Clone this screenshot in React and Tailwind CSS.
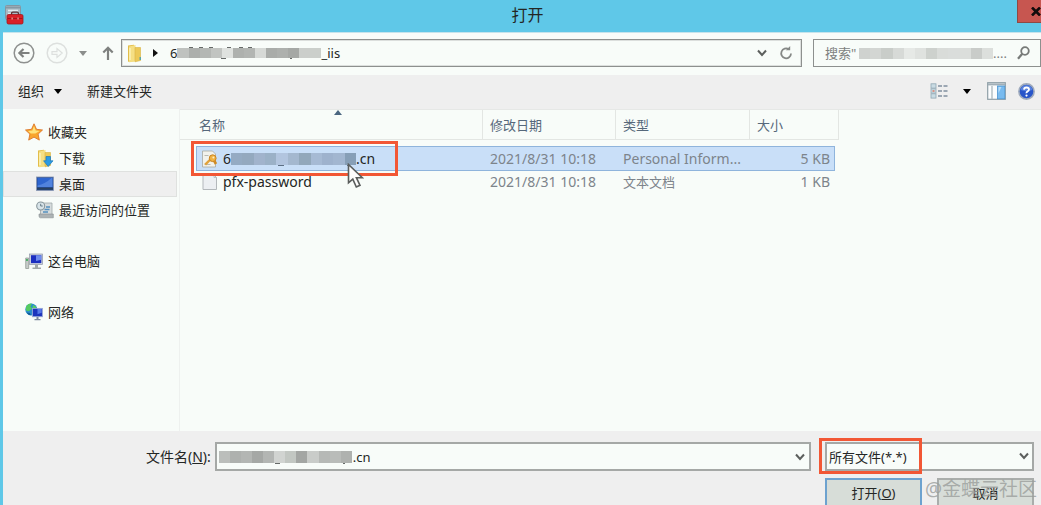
import React from "react";

function Mosaic({ colors, marks = [], markColor = "#666a68", className = "" }) {
  return (
    <span aria-hidden="true" className={`flex ${className}`}>
      {colors.map((c, i) => (
        <span key={i} className="h-full flex-1" style={{ backgroundColor: c }} />
      ))}
      {marks.map(([left, width, top]) => (
        <span
          key={left}
          className={`absolute h-px ${top ? "bottom-full" : "top-full"}`}
          style={{ left, width, backgroundColor: markColor }}
        />
      ))}
    </span>
  );
}

const Chevron = ({ className = "" }) => (
  <svg viewBox="0 0 10 8" className={`h-2 w-[10px] ${className}`} fill="none" stroke="#5c5f5d" strokeWidth="2">
    <path d="M1 1.5 5 6l4-4.5" />
  </svg>
);

const Caret = ({ className = "" }) => (
  <svg viewBox="0 0 8 5" className={`h-[5px] w-2 ${className}`}>
    <path d="M0 0h8L4 5z" fill="currentColor" />
  </svg>
);

const AppIcon = () => (
  <svg viewBox="0 0 19 20" className="h-5 w-[19px]">
    <rect x="0.5" y="0.5" width="15" height="14" rx="1" fill="#a9bbc5" stroke="#8397a3" />
    <path d="M1 2.5h14" stroke="#8499a5" strokeWidth="2" />
    <path d="M3 5.5h10M3 8.5h4" stroke="#e3edf1" strokeWidth="1.6" />
    <path d="M6.5 10V8.7Q6.5 7.2 8 7.2h4q1.5 0 1.5 1.5V10" fill="none" stroke="#5d3334" strokeWidth="1.3" />
    <rect x="2" y="9.5" width="16" height="9.5" rx="1.5" fill="#d92027" stroke="#a5171c" strokeWidth="0.8" />
    <path d="M2.5 13.5h15" stroke="#a3161b" />
    <path d="M6.4 12.6h1.5v2H6.4zM12.3 12.6h1.5v2h-1.5z" fill="#e88a88" />
  </svg>
);

const CircleArrow = ({ faded, flip }) => (
  <svg viewBox="0 0 22 22" className="h-[22px] w-[22px]" fill="none" stroke={faded ? "#dde0de" : "#8e918f"}>
    <circle cx="11" cy="11" r="9.8" strokeWidth="1.5" />
    {flip ? (
      <path d="M6 9.7h5V6.6l5.2 4.4-5.2 4.4v-3.1H6z" strokeWidth="1.2" />
    ) : (
      <path d="M16.5 11H6.5M10.5 7 6.4 11l4.1 4" strokeWidth="2.2" stroke="#7e817f" />
    )}
  </svg>
);

const Folder = ({ download }) => (
  <svg viewBox="0 0 18 19" className="h-[19px] w-[18px]">
    <path d="M2 1.5 8 .8v16.4l-6 .5z" fill="#e2bd4a" />
    <path d="M3 2.5 9.5 1v16.5L3 18.2z" fill="#f5df83" />
    <path d="M9 3.5h5.5v13L9 17.8z" fill="#ecc957" stroke="#d9b243" strokeWidth="0.6" />
    <path d="M4 4v12" stroke="#fbf0b4" strokeWidth="1.6" />
    {download ? (
      <path d="M10 7.5h4.5v4.3H17l-4.8 5.7-4.6-5.7H10z" fill="#2c9ae2" stroke="#1878bb" strokeWidth="0.7" />
    ) : (
      <path d="M13.5 13h1.5v3h-1.5z" fill="#5ba6a6" />
    )}
  </svg>
);

const Star = () => (
  <svg viewBox="0 0 18 18" className="h-[18px] w-[18px]">
    <path d="m9 .8 2.5 5.5 6 .7-4.4 4.1 1.2 6L9 14.1l-5.3 3 1.2-6L.5 7l6-.7z" fill="#f9a52c" stroke="#dc7628" strokeWidth="0.9" />
    <path d="m9 3 1.7 4.4 4 .5-4.4 2.5H5.8L3 7.9l4.4-.5z" fill="#ffe27b" />
  </svg>
);

const DesktopIcon = () => (
  <svg viewBox="0 0 18 16" className="h-4 w-[18px]">
    <rect x="0.5" y="1" width="17" height="13.5" fill="#254d9c" stroke="#8a97b1" strokeWidth="0.8" />
    <path d="M1.5 2h15v9h-15z" fill="#2e65cf" />
    <path d="M1.5 9.5Q9 8 15.5 2h1v9h-15z" fill="#73a2ed" opacity=".5" />
    <path d="M1 12.7h16" stroke="#284160" strokeWidth="2" />
  </svg>
);

const RecentIcon = () => (
  <svg viewBox="0 0 18 18" className="h-[18px] w-[18px]">
    <path d="M4.5 2H16v13H4.5z" fill="#d7dcdd" stroke="#a0a8aa" strokeWidth="0.8" />
    <path d="M3 13h14.3v3.8H4.5Q3 16.7 3 15z" fill="#adb3b5" stroke="#878f91" strokeWidth="0.6" />
    <path d="M10 6h4M8.5 8.5h5M7 11h5" stroke="#5690bf" strokeWidth="1.3" />
    <circle cx="4.7" cy="5" r="4" fill="#d8e4e9" stroke="#89979d" strokeWidth="1.1" />
    <path d="M4.7 2.8V5h2" fill="none" stroke="#647985" />
  </svg>
);

const ComputerIcon = () => (
  <svg viewBox="0 0 18 17" className="h-[17px] w-[18px]">
    <path d="M.7 5h3v10.5h-3z" fill="#c7ccca" stroke="#89928d" strokeWidth="0.7" />
    <path d="M1 7h2" stroke="#29a84b" strokeWidth="1.7" />
    <rect x="4.6" y="1" width="13" height="10.5" fill="#cbd0dd" stroke="#9198a8" strokeWidth="0.7" />
    <path d="M6 2.2h10.3v7.9H6z" fill="#1c2fc0" />
    <path d="M11 2.2h5.3v4.5L11 8z" fill="#6e8ced" />
    <path d="M10 11.5h3v3h3v1.5H7.5v-1.5H10z" fill="#a1a8a8" />
  </svg>
);

const NetworkIcon = () => (
  <svg viewBox="0 0 18 18" className="h-[18px] w-[18px]">
    <circle cx="6.3" cy="6.5" r="6" fill="#298dcc" />
    <path d="M1 4Q3 0 7 .7L5.5 3.5 7 5.5 3.8 8.3 1 7.5zM8 2l3.5 2-2 3-2-2z" fill="#55cb60" />
    <path d="M1.5 9.5 5 10l1 2.3Q3 12.3 1.5 9.5z" fill="#125e99" />
    <rect x="7.4" y="5.4" width="10" height="8.3" fill="#1c34bd" stroke="#99a9d6" strokeWidth="0.9" />
    <path d="M12.5 6h4.2v3.8l-4.2 1.5z" fill="#5678e8" />
    <path d="M11.5 14h2v2h2v1.2h-6V16h2z" fill="#7b87a0" />
  </svg>
);

const CertIcon = () => (
  <svg viewBox="0 0 18 18" className="h-[18px] w-[18px]">
    <path d="M1.5 1h10l3 3v13h-13z" fill="#f2f2ec" stroke="#a8a8a0" strokeWidth="0.8" />
    <path d="M3.5 5.5h4M3.5 14.5h6" stroke="#b8b9b3" />
    <path d="M9.3 9.5 4.2 14.7" stroke="#e0a23c" strokeWidth="2.4" />
    <path d="M12.5 9.5 15 14" stroke="#d08b24" strokeWidth="2.6" />
    <circle cx="11.7" cy="8.2" r="3.4" fill="#efb243" stroke="#c98524" />
    <circle cx="12.4" cy="7.4" r="1" fill="#fdeec4" />
  </svg>
);

const FileIcon = () => (
  <svg viewBox="0 0 18 18" className="h-[18px] w-[18px]">
    <path d="M2 2h11l2.5 2.5V16.5H2z" fill="#eceff2" stroke="#b3b8bb" />
    <path d="M13 2v2.5h2.5" fill="none" stroke="#b3b8bb" strokeWidth="0.8" />
  </svg>
);

const ViewIcon = () => (
  <svg viewBox="0 0 18 16" className="h-4 w-[18px]">
    <g fill="#c9dbe3" stroke="#91a8b4" strokeWidth="0.8">
      <rect x="1" y="0.8" width="5" height="4.3" />
      <rect x="1" y="5.8" width="5" height="4.3" />
      <rect x="1" y="10.8" width="5" height="4.3" />
    </g>
    <path d="M2.5 8h2" stroke="#dd806d" strokeWidth="1.6" />
    <path d="M8 3h4M13.5 3h4M8 8h4M13.5 8h4M8 13h4M13.5 13h4" stroke="#8190a0" strokeWidth="1.5" />
  </svg>
);

const PaneIcon = () => (
  <svg viewBox="0 0 19 18" className="h-[18px] w-[19px]">
    <rect x="0.7" y="0.7" width="17.6" height="16.6" fill="#fbfdfe" stroke="#8f9fa7" strokeWidth="1.2" />
    <path d="M1 2.4h17" stroke="#a2afb7" strokeWidth="2" />
    <path d="M5 4v13" stroke="#b0bcc2" strokeWidth="1.4" />
    <rect x="10.5" y="4" width="7.3" height="12.8" fill="#79bbef" stroke="#4a95d1" strokeWidth="0.8" />
    <path d="M11.5 5h3l-3 6z" fill="#b9def9" />
  </svg>
);

const HelpIcon = () => (
  <svg viewBox="0 0 17 17" className="h-[17px] w-[17px]">
    <circle cx="8.5" cy="8.5" r="7.6" fill="#2855c9" stroke="#9da9bc" strokeWidth="1.6" />
    <path d="M2.5 7Q3.5 2.5 8.5 2.3T14.5 7Q8.5 9 2.5 7z" fill="#6c95e8" opacity=".7" />
    <path d="M6 6.6Q6.1 4.5 8.5 4.5T11 6.5Q11 7.7 9.6 8.4T8.5 10.3" fill="none" stroke="white" strokeWidth="1.8" />
    <circle cx="8.5" cy="12.6" r="1.1" fill="white" />
  </svg>
);

const Pointer = () => (
  <svg viewBox="0 0 17 26" className="h-[26px] w-[17px]">
    <path d="M1.5 1.5v18.3l4.3-3.7 3.5 7.9 3.7-1.7-3.6-7.6h5.9z" fill="#fdfdfd" stroke="#5a5d5c" strokeWidth="1.6" />
  </svg>
);

function SideItem({ icon, label, nested, selected }) {
  return (
    <button
      type="button"
      className={`flex h-[26px] w-full items-center gap-[5px] border text-left ${nested ? "pl-8" : "pl-[21px]"} ${
        selected ? "border-[#dfe1df] bg-[#efefef]" : "border-transparent"
      }`}
    >
      <span className="flex w-[18px] shrink-0 justify-center">{icon}</span>
      <span className="whitespace-nowrap">{label}</span>
    </button>
  );
}

const pathColors = ["#bfc2bf", "#acafac", "#b4b7b4", "#c1c4c1", "#dfe2df", "#aeb1ae", "#b2b5b2", "#d6d9d6", "#a9aca9", "#adb0ad", "#a5a8a5", "#cbcecb", "#cbcfcb"];
const searchColors = ["#cfd2cf", "#d3d6d3", "#c9cdc9", "#d7dad7", "#e6e9e6", "#dfe2df", "#cdd1cd", "#d9dcd9", "#dadddb", "#dbdedb", "#c9ccc9", "#dcdfdc"];
const rowColors = ["#95abc3", "#94a9bf", "#a1b3cc", "#9bb1c7", "#b2c5df", "#a4b8cf", "#92a8bb", "#a6bad4", "#9eb2cd", "#a2b6d0", "#879fb7"];
const nameColors = ["#bbbebb", "#aeb1ae", "#b3b6b3", "#a5a8a5", "#b3b6b3", "#d1d4d1", "#c2c7c2", "#a3a6a3", "#c9ccc9", "#b6b9b6", "#b9bcb9", "#afb2af"];

const pathMarks = [[12, 4, true], [22, 4, true], [32, 4, true], [44, 5], [50, 4, true], [62, 4, true], [71, 4, true], [113, 2]];
const rowMarks = [[47, 6], [116, 3]];
const nameMarks = [[56, 5], [124, 2]];

const headCell = "relative h-[30px] border-b border-r border-[#e3e6e3] p-0 pl-[7px] text-left font-normal text-[#56687b]";
const selCell = "h-[25px] border-y border-[#8fb4dc] bg-[#c9dff8] p-0";
const rowCell = "h-[22px] p-0";

export default function App() {
  return (
    <div
      lang="zh-CN"
      className="flex min-h-screen flex-col bg-[#5fc8e8] font-['Noto_Sans','Noto_Sans_CJK_SC',sans-serif] text-[13px] leading-5 text-[#242624]"
    >
      <header className="flex h-8 items-start">
        <span className="pl-[5px] pt-[5px]">
          <AppIcon />
        </span>
        <h1 className="flex-1 pl-[14px] pt-[3px] text-center text-[16px] leading-6">打开</h1>
        <button type="button" aria-label="关闭" className="flex h-[23px] w-6 items-center justify-end border-b border-l border-[#8e4944] bg-[#c75650]">
          <svg viewBox="0 0 10 9" className="h-[9px] w-[10px]" stroke="#120b0b" strokeWidth="2.6">
            <path d="m1 .5 8 8M9 .5l-8 8" />
          </svg>
        </button>
      </header>

      <div className="ml-[3px] flex flex-1 flex-col border-t border-[#c5e4ec] bg-[#f8fcf9]">
        <nav className="flex h-[42px] items-center pb-[2px] pl-[10px]">
          <button type="button" aria-label="后退"><CircleArrow /></button>
          <button type="button" aria-label="前进" className="ml-[11px]"><CircleArrow faded flip /></button>
          <button type="button" aria-label="最近位置" className="ml-[11px] text-[#8b8e8c]"><Caret /></button>
          <button type="button" aria-label="上移" className="ml-[15px]">
            <svg viewBox="0 0 12 14" className="h-[14px] w-3" fill="none" stroke="#7e817f" strokeWidth="2.2">
              <path d="M6 14V2M1.3 6.5 6 1.8l4.7 4.7" />
            </svg>
          </button>
          <div className="ml-[7px] flex h-7 flex-1 items-center border border-[#8d908e] pl-1 pr-2 shadow-[inset_0_0_0_1px_#dcdfdd]">
            <Folder />
            <svg viewBox="0 0 5 8" className="ml-[9px] h-2 w-[5px]"><path d="M0 0v8l5-4z" fill="#111" /></svg>
            <span className="ml-3">6</span>
            <Mosaic colors={pathColors} marks={pathMarks} className="relative h-[10px] w-[144px]" />
            <span>_iis</span>
            <button type="button" aria-label="历史路径" className="ml-auto"><Chevron /></button>
            <button type="button" aria-label="刷新" className="ml-3">
              <svg viewBox="0 0 14 14" className="h-[14px] w-[14px]" fill="none" stroke="#858886" strokeWidth="1.8">
                <path d="M9.8 3.3A4.9 4.9 0 1 0 12 7.5" />
                <path d="M6.8 4.3h4.4V0z" fill="#858886" stroke="none" />
              </svg>
            </button>
          </div>
          <div className="relative ml-[11px] flex h-7 w-[228px] items-center border border-[#8d908e] pl-[11px] pr-[10px]">
            <input type="search" aria-label="搜索" placeholder='搜索"' className="min-w-0 flex-1 bg-transparent outline-none placeholder:text-[#7e817f]" />
            <span className="absolute left-[45px] flex items-center text-[#7e817f]">
              <Mosaic colors={searchColors} className="relative h-[11px] w-[134px]" />
              ....
            </span>
            <svg viewBox="0 0 13 14" className="h-[14px] w-[13px]" fill="none" stroke="#777a78" strokeWidth="1.8">
              <circle cx="8" cy="5" r="3.8" />
              <path d="M5.3 7.8 1 12.7" strokeWidth="2.3" />
            </svg>
          </div>
        </nav>

        <div className="flex h-[34px] items-center bg-[#efefef] pb-[2px] pl-[15px] pr-[6px]">
          <button type="button" className="flex items-center gap-[10px]">
            组织 <Caret className="text-black" />
          </button>
          <button type="button" className="ml-[25px]">新建文件夹</button>
          <button type="button" aria-label="更改视图" className="ml-auto"><ViewIcon /></button>
          <button type="button" aria-label="更多视图" className="ml-[15px] text-black"><Caret /></button>
          <button type="button" aria-label="预览窗格" className="ml-4"><PaneIcon /></button>
          <button type="button" aria-label="帮助" className="ml-3"><HelpIcon /></button>
        </div>

        <main className="flex flex-1">
          <aside className="w-[177px] shrink-0 border-r border-[#eef1ef] pr-[2px] pt-[10px]">
            <SideItem icon={<Star />} label="收藏夹" />
            <SideItem nested icon={<Folder download />} label="下载" />
            <SideItem nested selected icon={<DesktopIcon />} label="桌面" />
            <SideItem nested icon={<RecentIcon />} label="最近访问的位置" />
            <div className="mt-[25px]"><SideItem icon={<ComputerIcon />} label="这台电脑" /></div>
            <div className="mt-[25px]"><SideItem icon={<NetworkIcon />} label="网络" /></div>
          </aside>

          <section className="relative flex-1 border-t border-[#e6e8e6]">
            <table className="w-[659px] table-fixed border-separate border-spacing-0">
              <colgroup>
                <col className="w-4" />
                <col className="w-[287px]" />
                <col className="w-[133px]" />
                <col className="w-[134px]" />
                <col className="w-[85px]" />
                <col className="w-1" />
              </colgroup>
              <thead>
                <tr>
                  <th colSpan={2} className="relative h-[30px] border-b border-r border-[#e3e6e3] p-0 pl-[19px] text-left font-normal text-[#56687b]">
                    名称
                    <svg viewBox="0 0 8 5" className="absolute left-[51%] top-0 h-[5px] w-2"><path d="M0 5h8L4 0z" fill="#4b6680" /></svg>
                  </th>
                  <th className={headCell}>修改日期</th>
                  <th className={headCell}>类型</th>
                  <th colSpan={2} className={headCell}>大小</th>
                </tr>
              </thead>
              <tbody className="text-[14px] text-[#7d848b]">
                <tr aria-hidden="true"><td colSpan={6} className="h-[6px] p-0" /></tr>
                <tr>
                  <td className="p-0" />
                  <td className={`${selCell} border-l text-[#242624]`}>
                    <span className="flex h-[22px] items-center pl-1">
                      <CertIcon />
                      <span className="ml-1">6</span>
                      <Mosaic colors={rowColors} marks={rowMarks} markColor="#5c6f84" className="relative h-3 w-[125px]" />
                      <span>.cn</span>
                    </span>
                  </td>
                  <td className={`${selCell} pl-[7px]`}>2021/8/31 10:18</td>
                  <td className={`${selCell} pl-[7px]`}>Personal Inform...</td>
                  <td className={`${selCell} border-r pr-1 text-right`}>5 KB</td>
                  <td className="p-0" />
                </tr>
                <tr>
                  <td className="p-0" />
                  <td className={`${rowCell} text-[#242624]`}>
                    <span className="flex items-center gap-1 pl-[5px]"><FileIcon />pfx-password</span>
                  </td>
                  <td className={`${rowCell} pl-[7px]`}>2021/8/31 10:18</td>
                  <td className={`${rowCell} pl-[7px] text-[13px]`}>文本文档</td>
                  <td className={`${rowCell} pr-[5px] text-right`}>1 KB</td>
                  <td className="p-0" />
                </tr>
              </tbody>
            </table>
            <div className="pointer-events-none absolute left-[11px] top-[31px] h-[35px] w-[207px] border-[3px] border-[#f25735]" />
            <div className="pointer-events-none absolute left-[167px] top-[53px]"><Pointer /></div>
          </section>
        </main>

        <footer className="relative bg-[#efefef] pl-[143px] pr-[7px] pt-[11px]">
          <div className="flex items-center">
            <label htmlFor="file-name" className="whitespace-nowrap text-[14px]">文件名(<u>N</u>):</label>
            <div className="relative ml-1 flex h-[29px] flex-1 items-center border-2 border-[#a5a8a6] bg-[#f8fcf9] pr-1">
              <input id="file-name" type="text" defaultValue=".cn" className="min-w-0 flex-1 bg-transparent pl-[136px] outline-none" />
              <Mosaic colors={nameColors} marks={nameMarks} className="absolute left-[2px] h-3 w-[133px]" />
              <Chevron />
            </div>
            <div className="relative ml-[14px] h-[29px] w-[209px]">
              <select aria-label="文件类型" className="h-full w-full appearance-none border-2 border-[#a5a8a6] bg-[#f8fcf9] pl-[2px] outline-none">
                <option>所有文件(*.*)</option>
              </select>
              <Chevron className="pointer-events-none absolute right-[5px] top-[10px]" />
              <div className="pointer-events-none absolute -left-[6px] -top-1 h-9 w-[103px] border-[3px] border-[#f25735]" />
            </div>
          </div>
          <div className="mt-[7px] flex justify-end gap-[15px]">
            <button type="button" className="h-[27px] w-[97px] border-2 border-b-0 border-[#6da2cf] bg-[#d7ddd8]">打开(<u>O</u>)</button>
            <button type="button" className="h-[27px] w-[97px] border-2 border-b-0 border-[#aaadab] bg-[#d7ddd8]">取消</button>
          </div>
          <span className="pointer-events-none absolute bottom-1 right-1 whitespace-nowrap text-[19px] leading-6 text-[#9a9d9b]/80">@金蝶云社区</span>
        </footer>
      </div>
    </div>
  );
}
